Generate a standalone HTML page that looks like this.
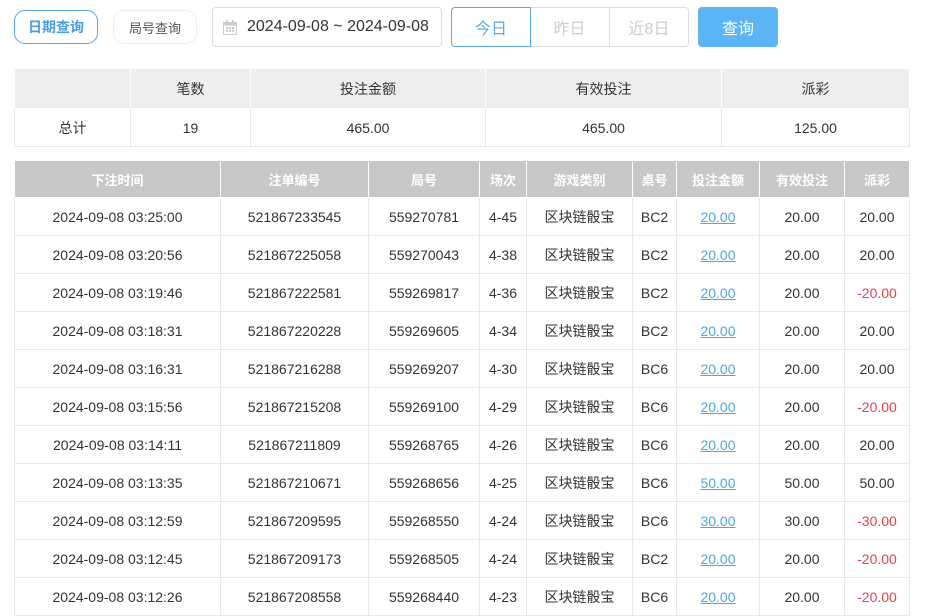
<!DOCTYPE html>
<html><head><meta charset="utf-8"><style>
*{box-sizing:border-box;margin:0;padding:0}
body{width:945px;height:600px;overflow:hidden;background:#fff;font-family:"Liberation Sans","Noto Sans CJK SC",sans-serif;color:#333;position:relative}
.a{position:absolute}
.btn{position:absolute;display:flex;align-items:center;justify-content:center;font-size:14px}
table{border-collapse:collapse;position:absolute;table-layout:fixed}
td,th{text-align:center;font-size:14px;border:1px solid #e8e8e8;padding:0}
.s th{background:#eee;font-weight:normal;height:40px;border-color:#fff}
.s td{height:38px}
.d th{background:#c8c8c8;color:#fff;font-weight:bold;height:37px;font-size:13px;border-color:#fff}
.d td{height:38px}
.l{color:#4aa8e8;text-decoration:underline}
.r{color:#e8404a}
</style></head><body>
<div class="btn" style="left:14px;top:10px;width:84px;height:34px;border:1px solid #5aa9e6;border-radius:11px;color:#4a9de0;font-weight:bold">日期查询</div>
<div class="btn" style="left:113px;top:10px;width:84px;height:34px;border:1px solid #eee;border-radius:11px;color:#555;font-size:13px">局号查询</div>
<div class="btn" style="left:212px;top:7px;width:230px;height:40px;border:1px solid #ddd;border-radius:4px;justify-content:flex-start;padding-left:10px;font-size:16px;color:#333">
<svg width="14" height="15" viewBox="0 0 14 15" style="margin-right:10px"><rect x="0.5" y="2.5" width="13" height="12" fill="none" stroke="#ccc"/><rect x="0.5" y="2.5" width="13" height="3" fill="#ccc"/><rect x="3" y="0" width="2" height="4" fill="#ccc"/><rect x="9" y="0" width="2" height="4" fill="#ccc"/><g fill="#ccc"><rect x="3" y="7" width="2" height="2"/><rect x="6" y="7" width="2" height="2"/><rect x="9" y="7" width="2" height="2"/><rect x="3" y="10" width="2" height="2"/><rect x="6" y="10" width="2" height="2"/><rect x="9" y="10" width="2" height="2"/></g></svg>2024-09-08 ~ 2024-09-08</div>
<div class="a" style="left:451px;top:7px;width:238px;height:40px;border:1px solid #ddd;border-radius:4px"></div>
<div class="btn" style="left:451px;top:7px;width:80px;height:40px;border:1px solid #5aa9e6;border-radius:4px 0 0 4px;color:#5aa9e6;font-size:16px">今日</div>
<div class="btn" style="left:530px;top:7px;width:80px;height:40px;border-right:1px solid #ddd;color:#ccc;font-size:16px">昨日</div>
<div class="btn" style="left:609px;top:7px;width:80px;height:40px;color:#ccc;font-size:16px">近8日</div>
<div class="btn" style="left:698px;top:7px;width:80px;height:40px;background:#5ab4f5;border-radius:4px;color:#fff;font-size:16px">查询</div>
<table class="s" style="left:14px;top:68px;width:896px">
<colgroup><col style="width:116px"><col style="width:120px"><col style="width:235px"><col style="width:236px"><col></colgroup>
<tr><th></th><th>笔数</th><th>投注金额</th><th>有效投注</th><th>派彩</th></tr>
<tr><td>总计</td><td>19</td><td>465.00</td><td>465.00</td><td>125.00</td></tr>
</table>
<table class="d" style="left:14px;top:160px;width:896px">
<colgroup><col style="width:206px"><col style="width:148px"><col style="width:111px"><col style="width:47px"><col style="width:106px"><col style="width:44px"><col style="width:83px"><col style="width:85px"><col></colgroup>
<tr><th>下注时间</th><th>注单编号</th><th>局号</th><th>场次</th><th>游戏类别</th><th>桌号</th><th>投注金额</th><th>有效投注</th><th>派彩</th></tr>
<tr><td>2024-09-08 03:25:00</td><td>521867233545</td><td>559270781</td><td>4-45</td><td>区块链骰宝</td><td>BC2</td><td class="l">20.00</td><td>20.00</td><td>20.00</td></tr>
<tr><td>2024-09-08 03:20:56</td><td>521867225058</td><td>559270043</td><td>4-38</td><td>区块链骰宝</td><td>BC2</td><td class="l">20.00</td><td>20.00</td><td>20.00</td></tr>
<tr><td>2024-09-08 03:19:46</td><td>521867222581</td><td>559269817</td><td>4-36</td><td>区块链骰宝</td><td>BC2</td><td class="l">20.00</td><td>20.00</td><td class="r">-20.00</td></tr>
<tr><td>2024-09-08 03:18:31</td><td>521867220228</td><td>559269605</td><td>4-34</td><td>区块链骰宝</td><td>BC2</td><td class="l">20.00</td><td>20.00</td><td>20.00</td></tr>
<tr><td>2024-09-08 03:16:31</td><td>521867216288</td><td>559269207</td><td>4-30</td><td>区块链骰宝</td><td>BC6</td><td class="l">20.00</td><td>20.00</td><td>20.00</td></tr>
<tr><td>2024-09-08 03:15:56</td><td>521867215208</td><td>559269100</td><td>4-29</td><td>区块链骰宝</td><td>BC6</td><td class="l">20.00</td><td>20.00</td><td class="r">-20.00</td></tr>
<tr><td>2024-09-08 03:14:11</td><td>521867211809</td><td>559268765</td><td>4-26</td><td>区块链骰宝</td><td>BC6</td><td class="l">20.00</td><td>20.00</td><td>20.00</td></tr>
<tr><td>2024-09-08 03:13:35</td><td>521867210671</td><td>559268656</td><td>4-25</td><td>区块链骰宝</td><td>BC6</td><td class="l">50.00</td><td>50.00</td><td>50.00</td></tr>
<tr><td>2024-09-08 03:12:59</td><td>521867209595</td><td>559268550</td><td>4-24</td><td>区块链骰宝</td><td>BC6</td><td class="l">30.00</td><td>30.00</td><td class="r">-30.00</td></tr>
<tr><td>2024-09-08 03:12:45</td><td>521867209173</td><td>559268505</td><td>4-24</td><td>区块链骰宝</td><td>BC2</td><td class="l">20.00</td><td>20.00</td><td class="r">-20.00</td></tr>
<tr><td>2024-09-08 03:12:26</td><td>521867208558</td><td>559268440</td><td>4-23</td><td>区块链骰宝</td><td>BC6</td><td class="l">20.00</td><td>20.00</td><td class="r">-20.00</td></tr>
</table>
</body></html>
